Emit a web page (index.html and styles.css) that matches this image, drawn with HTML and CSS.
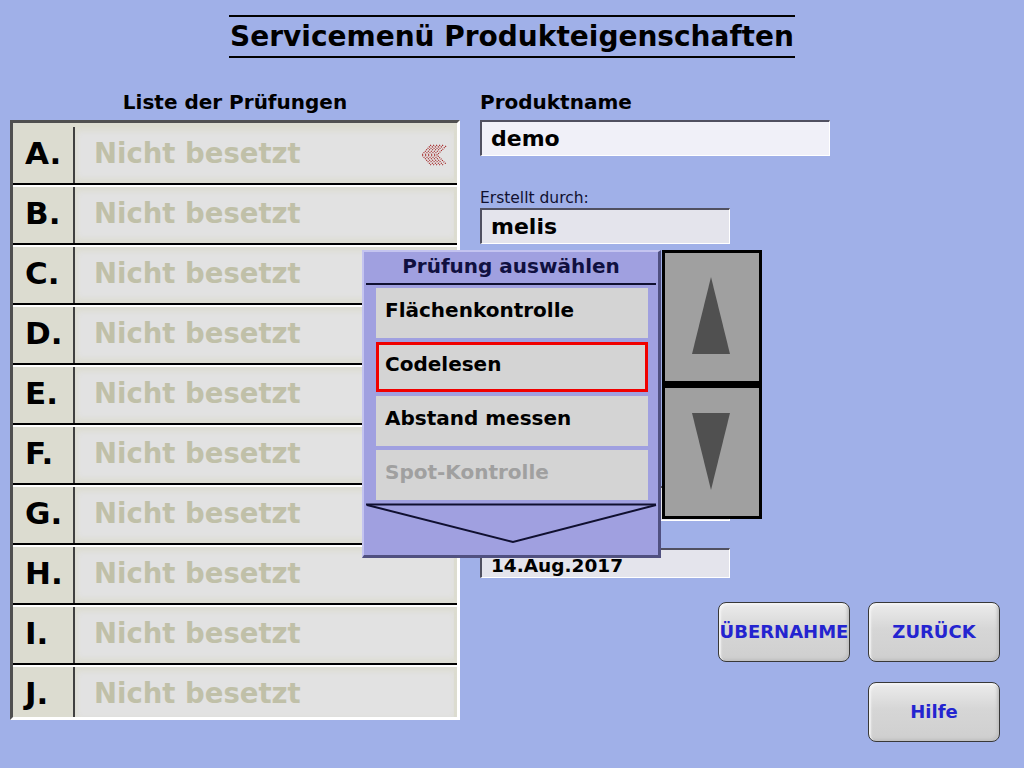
FILE: index.html
```html
<!DOCTYPE html>
<html lang="de">

<head>
    <meta charset="UTF-8">
    <meta name="viewport" content="width=device-width, initial-scale=1.0">
    <title>Servicemenü Produkteigenschaften</title>
    <link rel="stylesheet" href="styles.css">
</head>

<body>

    <div class="screen">
        <h1 class="page-title">Servicemenü Produkteigenschaften</h1>

        <div class="main">
            <!-- Liste der Pruefungen -->
            <div class="list-col">
                <div class="col-title">Liste der Prüfungen</div>
                <div class="test-list">
                    <div class="test-row">
                        <div class="slot">A.</div>
                        <div class="slot-value">
                            <span>Nicht besetzt</span>
                            <svg class="marker" width="28" height="24" viewBox="0 0 28 24">
                                <polyline points="12,2 3,12 12,22" />
                                <polyline points="15,2 6,12 15,22" />
                                <polyline points="18,2 9,12 18,22" />
                                <polyline points="21,2 12,12 21,22" />
                                <polyline points="24,2 15,12 24,22" />
                                <polyline points="27,3 18,12 27,21" />
                            </svg>
                        </div>
                    </div>
                    <div class="test-row">
                        <div class="slot">B.</div>
                        <div class="slot-value"><span>Nicht besetzt</span></div>
                    </div>
                    <div class="test-row">
                        <div class="slot">C.</div>
                        <div class="slot-value"><span>Nicht besetzt</span></div>
                    </div>
                    <div class="test-row">
                        <div class="slot">D.</div>
                        <div class="slot-value"><span>Nicht besetzt</span></div>
                    </div>
                    <div class="test-row">
                        <div class="slot">E.</div>
                        <div class="slot-value"><span>Nicht besetzt</span></div>
                    </div>
                    <div class="test-row">
                        <div class="slot">F.</div>
                        <div class="slot-value"><span>Nicht besetzt</span></div>
                    </div>
                    <div class="test-row">
                        <div class="slot">G.</div>
                        <div class="slot-value"><span>Nicht besetzt</span></div>
                    </div>
                    <div class="test-row">
                        <div class="slot">H.</div>
                        <div class="slot-value"><span>Nicht besetzt</span></div>
                    </div>
                    <div class="test-row">
                        <div class="slot">I.</div>
                        <div class="slot-value"><span>Nicht besetzt</span></div>
                    </div>
                    <div class="test-row">
                        <div class="slot">J.</div>
                        <div class="slot-value"><span>Nicht besetzt</span></div>
                    </div>
                </div>
            </div>

            <!-- Produktdaten -->
            <div class="info-col">
                <div class="col-title">Produktname</div>
                <div class="field field-wide field-light">demo</div>

                <div class="field-label label-created">Erstellt durch:</div>
                <div class="field">melis</div>

                <!-- fields below are covered by the popup -->
                <div class="field field-changed"></div>
                <div class="field field-date">14.Aug.2017</div>

                <div class="button-grid">
                    <button class="btn">ÜBERNAHME</button>
                    <button class="btn">ZURÜCK</button>
                    <button class="btn btn-help">Hilfe</button>
                </div>
            </div>
        </div>

        <!-- Auswahl-Popup -->
        <div class="picker">
            <div class="picker-title">Prüfung auswählen</div>
            <div class="picker-rule"></div>
            <div class="picker-items">
                <div class="picker-item">Flächenkontrolle</div>
                <div class="picker-item selected">Codelesen</div>
                <div class="picker-item">Abstand messen</div>
                <div class="picker-item disabled">Spot-Kontrolle</div>
            </div>
            <svg class="picker-more" width="294" height="51" viewBox="0 0 294 51">
                <line x1="2" y1="1.5" x2="292" y2="1.5" />
                <polyline points="3,2 149,39 292,2" />
            </svg>
        </div>

        <div class="scroller">
            <div class="scroll-btn">
                <svg width="40" height="78" viewBox="0 0 40 78">
                    <polygon points="19,0 38,77 0,77" />
                </svg>
            </div>
            <div class="scroll-btn scroll-down">
                <svg width="40" height="78" viewBox="0 0 40 78">
                    <polygon points="0,0 38,0 19,77" />
                </svg>
            </div>
        </div>
    </div>

</body>

</html>
```

FILE: styles.css
```css
body,
html {
    margin: 0;
    height: 100%;
    font-family: "DejaVu Sans", sans-serif;
    background: #a0b0e8;
    color: #000;
}

* {
    box-sizing: border-box;
}

.screen {
    position: relative;
    width: 1024px;
    height: 768px;
    overflow: hidden;
}

.page-title {
    width: 566px;
    margin: 15px auto 0;
    border-top: 2px solid #000;
    border-bottom: 2px solid #000;
    font-size: 28px;
    line-height: 39px;
    text-align: center;
    white-space: nowrap;
}

.main {
    display: flex;
    margin-top: 33px;
}

.col-title {
    font-size: 20px;
    font-weight: bold;
    line-height: 22px;
    margin-bottom: 7px;
}

/* left list */
.list-col {
    margin-left: 10px;
    width: 450px;
}

.list-col .col-title {
    text-align: center;
}

.test-list {
    height: 600px;
    padding-top: 2px;
    overflow: hidden;
    border-top: 3px solid #505050;
    border-left: 3px solid #505050;
    border-right: 3px solid #fff;
    border-bottom: 3px solid #fff;
    background: #dcdcd0;
}

.test-row {
    display: flex;
    height: 60px;
    border-top: 2px solid #fff;
    border-bottom: 2px solid #000;
}

.test-row:first-child {
    border-top-color: #dcdcd0;
}

.slot {
    width: 62px;
    padding-left: 12px;
    background: #dcdcd0;
    border-right: 2px solid #404040;
    font-size: 31px;
    font-weight: bold;
    line-height: 52px;
}

.slot-value {
    flex-grow: 1;
    display: flex;
    align-items: center;
    justify-content: space-between;
    padding: 0 10px 4px 19px;
    background: #e2e2e2;
    box-shadow: inset 0 4px 6px #dcdcd0, inset 0 -4px 6px #dcdcd0, inset -3px 0 0 #dcdcd0;
    font-size: 27.5px;
    font-weight: bold;
    color: #c0c0a8;
}

.marker {
    margin-top: 4px;
}

.marker polyline {
    fill: none;
    stroke: #a01818;
    stroke-width: 1.2;
    stroke-dasharray: 1 1;
}

/* right column */
.info-col {
    margin-left: 20px;
    flex-grow: 1;
}

.field {
    width: 250px;
    height: 36px;
    padding-left: 9px;
    background: #e4e4ec;
    border-top: 2px solid #505060;
    border-left: 2px solid #505060;
    border-bottom: 1px solid #fff;
    border-right: 1px solid #fff;
    font-size: 22px;
    font-weight: bold;
    line-height: 33px;
}

.field-wide {
    width: 350px;
}

.field-light {
    background: #f0f0f8;
}

.field-label {
    font-size: 15.5px;
    line-height: 16px;
    color: #101030;
    margin-bottom: 2px;
}

.label-created {
    margin-top: 34px;
}

.field-changed {
    height: 35px;
    margin-top: 242px;
}

.field-date {
    height: 30px;
    margin-top: 27px;
    font-size: 18.5px;
    line-height: 32px;
}

.button-grid {
    display: grid;
    grid-template-columns: 132px 132px;
    grid-auto-rows: 60px;
    gap: 20px 18px;
    margin: 24px 0 0 238px;
}

.btn {
    border: 1px solid #383838;
    border-radius: 8px;
    padding: 0 0 2px;
    background: linear-gradient(#ececec, #d6d6d6 45%, #cfcfcf);
    box-shadow: inset 2px 2px 2px #f4f4f4, inset -2px -2px 3px #c0c0c0;
    font-family: "DejaVu Sans", sans-serif;
    font-size: 18px;
    font-weight: bold;
    color: #2424d0;
}

.btn-help {
    grid-column: 2;
}

/* popup */
.picker {
    position: absolute;
    left: 362px;
    top: 250px;
    width: 299px;
    height: 308px;
    background: #a0a0e0;
    border-top: 2px solid #c4c4f0;
    border-left: 2px solid #c4c4f0;
    border-right: 3px solid #505080;
    border-bottom: 3px solid #505080;
}

.picker-title {
    height: 31px;
    line-height: 29px;
    text-align: center;
    font-size: 20px;
    font-weight: bold;
    color: #101040;
}

.picker-rule {
    height: 2px;
    margin: 0 2px;
    background: #101030;
}

.picker-items {
    display: flex;
    flex-direction: column;
    gap: 4px;
    margin: 3px 0 0 12px;
    width: 272px;
}

.picker-item {
    height: 50px;
    padding-left: 9px;
    background: #d4d4d4;
    font-size: 20px;
    font-weight: bold;
    line-height: 44px;
}

.picker-item.selected {
    border: 3px solid #f00000;
    padding-left: 6px;
    line-height: 38px;
}

.picker-item.disabled {
    color: #a0a0a0;
}

.picker-more {
    display: block;
    margin-top: 3px;
}

.picker-more line,
.picker-more polyline {
    fill: none;
    stroke: #101030;
    stroke-width: 2;
}

/* scroll buttons */
.scroller {
    position: absolute;
    left: 662px;
    top: 250px;
    width: 100px;
    height: 269px;
    display: flex;
    flex-direction: column;
    border: 3px solid #000;
    background: #a0a0a0;
}

.scroll-btn {
    flex-grow: 1;
    display: flex;
    justify-content: center;
    padding-top: 24px;
}

.scroll-down {
    border-top: 7px solid #000;
    padding-top: 25px;
}

.scroll-btn polygon {
    fill: #505050;
}
```
